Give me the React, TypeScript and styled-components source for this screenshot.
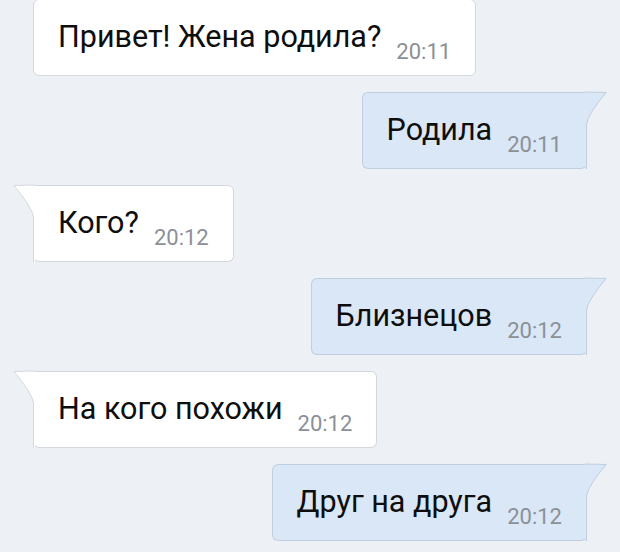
import styled, { createGlobalStyle } from 'styled-components';

const GlobalStyle = createGlobalStyle`
  html, body {
    margin: 0;
    padding: 0;
    background: #edf0f5;
  }
  body {
    font-family: Roboto, 'Noto Sans', sans-serif;
  }
`;

type Side = 'in' | 'out';

const messages: { text: string; time: string; side: Side }[] = [
  { text: 'Привет! Жена родила?', time: '20:11', side: 'in' },
  { text: 'Родила', time: '20:11', side: 'out' },
  { text: 'Кого?', time: '20:12', side: 'in' },
  { text: 'Близнецов', time: '20:12', side: 'out' },
  { text: 'На кого похожи', time: '20:12', side: 'in' },
  { text: 'Друг на друга', time: '20:12', side: 'out' },
];

const Chat = styled.div`
  width: 620px;
  height: 552px;
  overflow: hidden;
  display: flex;
  flex-direction: column;
  gap: 16px;
  padding: 0 33px;
  box-sizing: border-box;
  margin-top: -1px;
`;

const Bubble = styled.div<{ $side: Side; $tail: boolean }>`
  position: relative;
  align-self: ${(p) => (p.$side === 'in' ? 'flex-start' : 'flex-end')};
  display: flex;
  align-items: center;
  gap: 15px;
  height: 77px;
  box-sizing: border-box;
  padding: 0 24px 0 24px;
  background: ${(p) => (p.$side === 'in' ? '#ffffff' : '#dae7f6')};
  border: 1px solid ${(p) => (p.$side === 'in' ? '#d3d8df' : '#c0cfe0')};
  border-radius: 6px;
  ${(p) =>
    p.$tail && p.$side === 'in' ? 'border-top-left-radius: 0; border-left-color: transparent;' : ''}
  ${(p) =>
    p.$tail && p.$side === 'out' ? 'border-top-right-radius: 0; border-right-color: transparent;' : ''}
`;

const Text = styled.span`
  font-size: 30.5px;
  line-height: 36px;
  margin-bottom: 2px;
  color: #0e0e0e;
  white-space: nowrap;
`;

const Time = styled.span`
  font-size: 22px;
  line-height: 22px;
  margin-top: 28px;
  color: #8b9097;
`;

const TailSvg = styled.svg<{ $side: Side }>`
  position: absolute;
  top: -1px;
  ${(p) => (p.$side === 'in' ? 'left: -21px;' : 'right: -21px;')}
  width: 22px;
  height: 77px;
  overflow: visible;
`;

function Tail({ side }: { side: Side }) {
  const fill = side === 'in' ? '#ffffff' : '#dae7f6';
  const stroke = side === 'in' ? '#d3d8df' : '#c0cfe0';
  if (side === 'in') {
    return (
      <TailSvg $side={side} viewBox="0 0 22 77">
        <path d="M21 0 L1 0 Q0 0 1 1.5 Q19 22 21 32 L21 77 L22 77 L22 0 Z" fill={fill} />
        <path d="M22 0 L1 0.5 Q19 22 20.5 32 L20.5 77" fill="none" stroke={stroke} strokeWidth="1" />
      </TailSvg>
    );
  }
  return (
    <TailSvg $side={side} viewBox="0 0 22 77">
      <path d="M1 0 L21 0 Q22 0 21 1.5 Q3 22 1 32 L1 77 L0 77 L0 0 Z" fill={fill} />
      <path d="M0 0 L21 0.5 Q3 22 1.5 32 L1.5 77" fill="none" stroke={stroke} strokeWidth="1" />
    </TailSvg>
  );
}

export default function App() {
  return (
    <>
      <GlobalStyle />
      <Chat>
        {messages.map((m, i) => {
          const tail = i > 0;
          return (
            <Bubble key={i} $side={m.side} $tail={tail}>
              {tail && <Tail side={m.side} />}
              <Text>{m.text}</Text>
              <Time>{m.time}</Time>
            </Bubble>
          );
        })}
      </Chat>
    </>
  );
}
